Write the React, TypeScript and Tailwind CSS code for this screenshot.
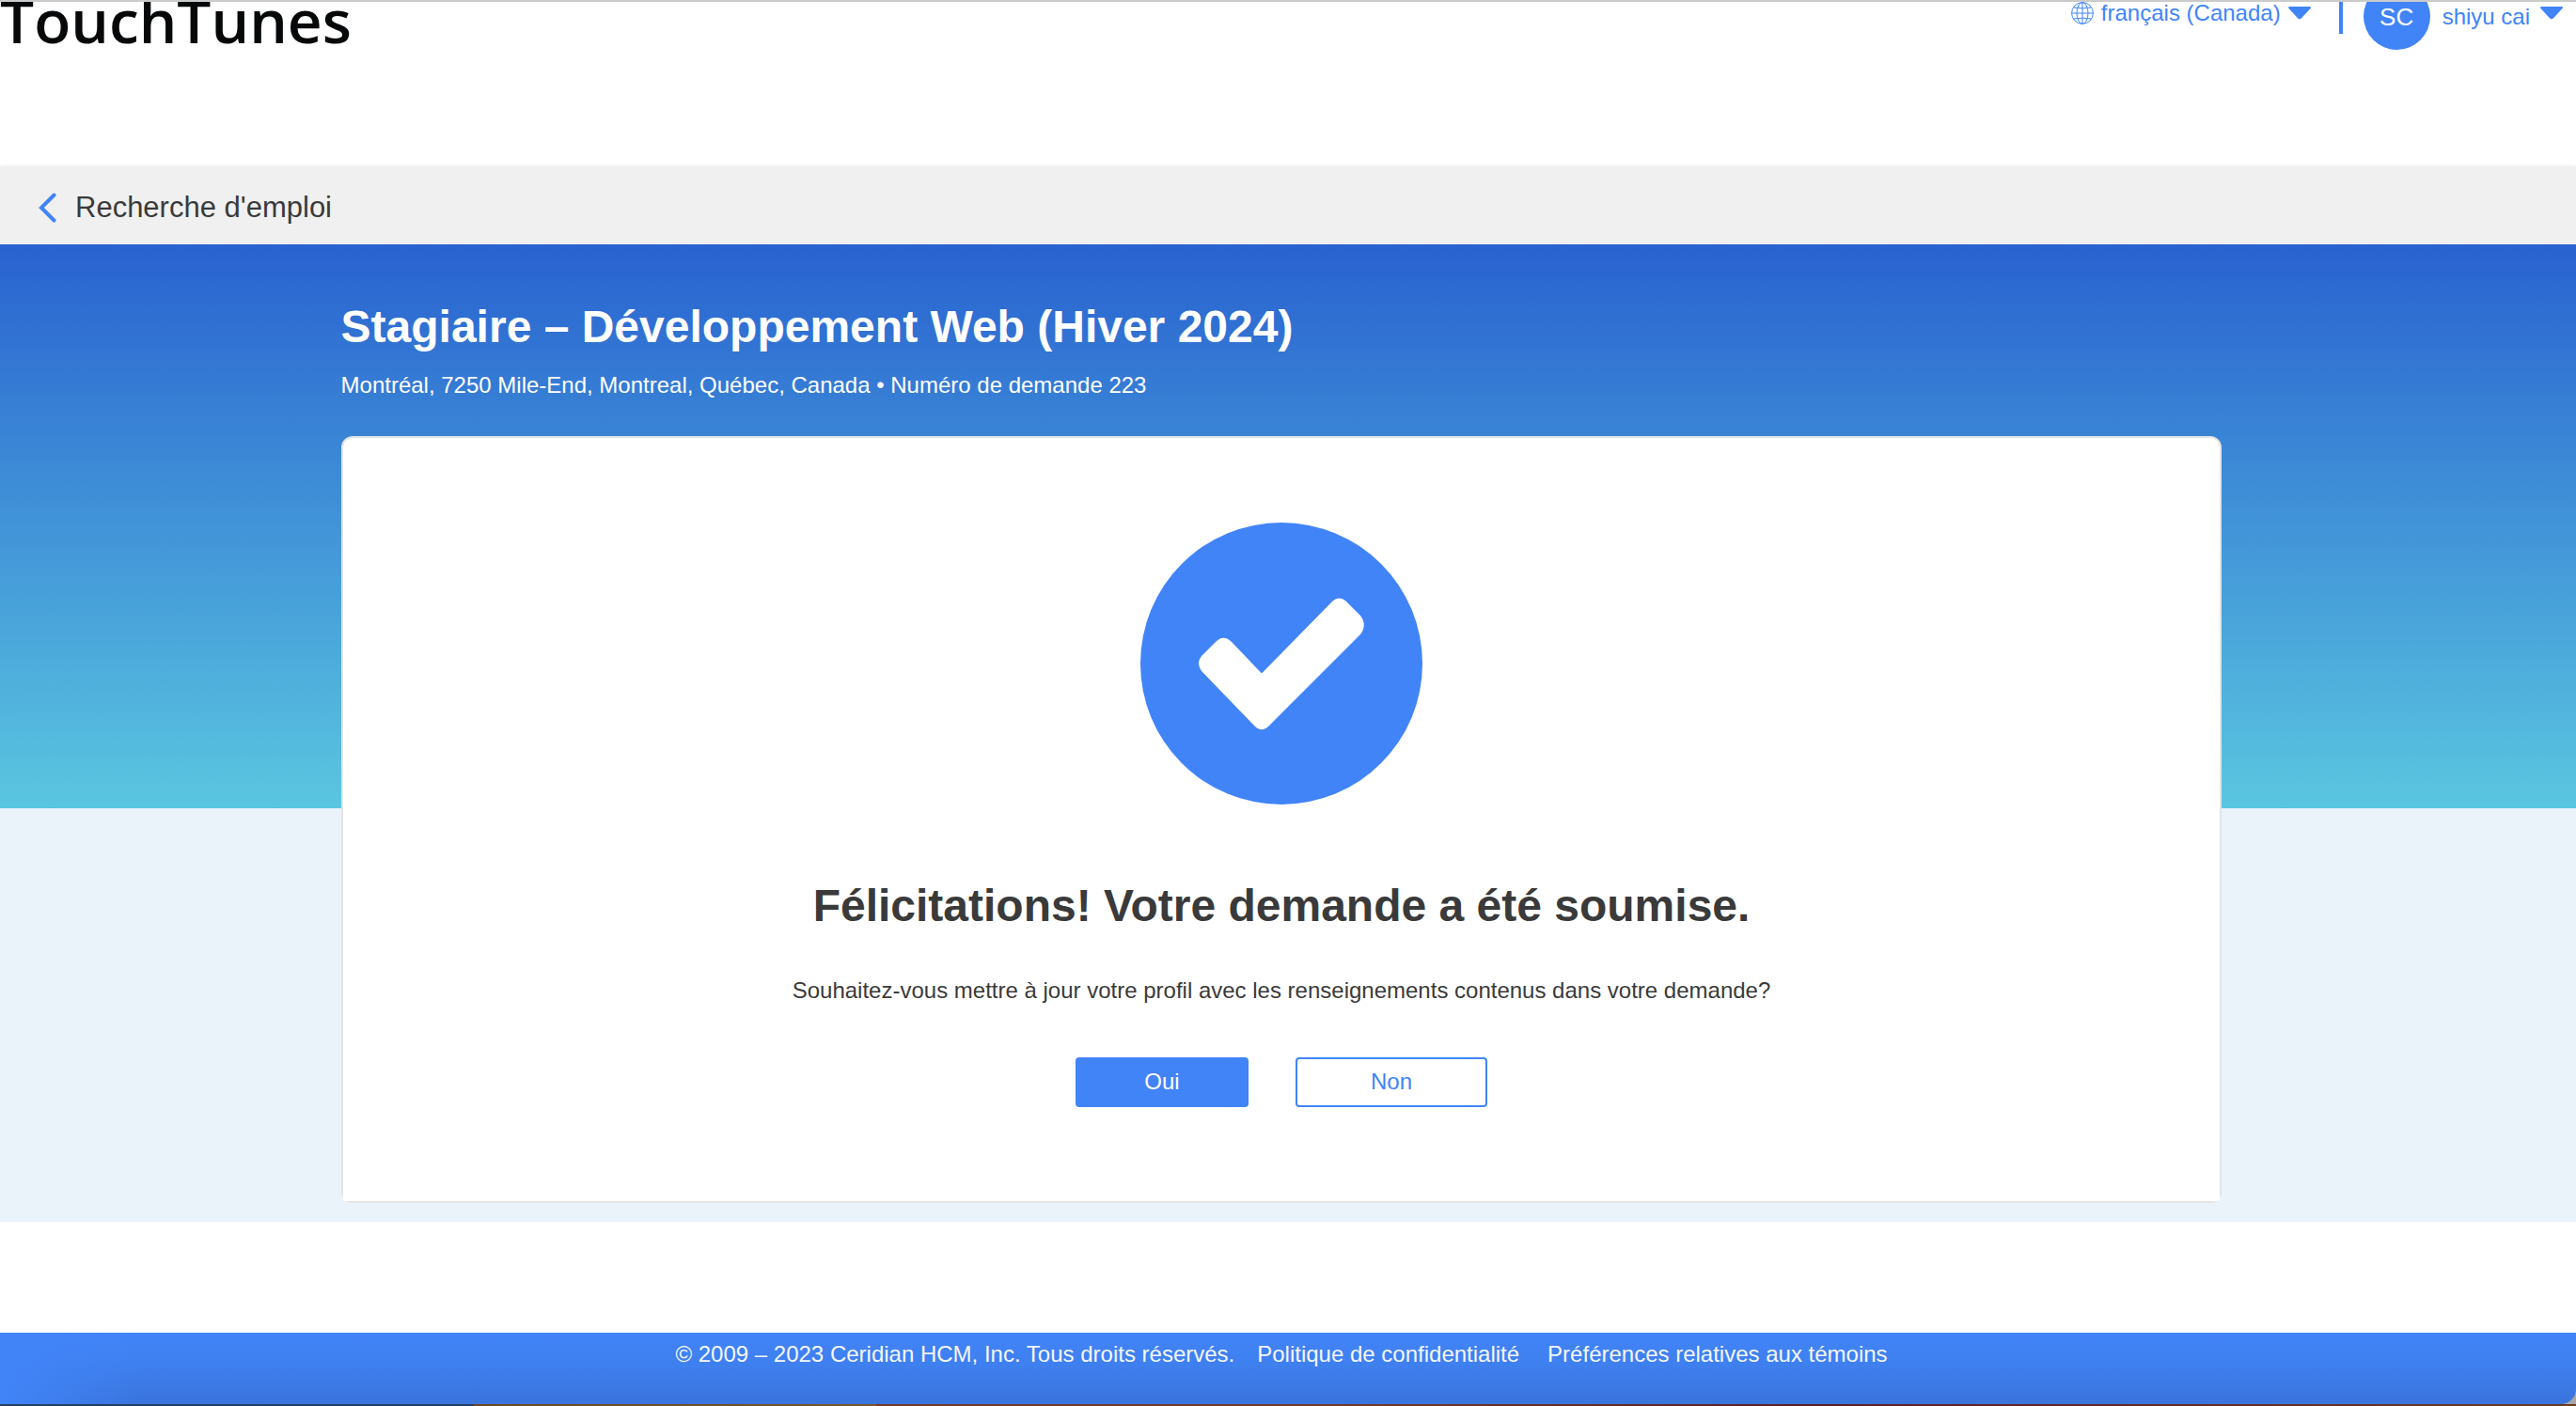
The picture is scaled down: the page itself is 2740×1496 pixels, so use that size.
import React from "react";

function Caret() {
  return (
    <svg className="h-[14px] w-6 shrink-0" viewBox="0 0 24 14" fill="currentColor" aria-hidden="true">
      <path d="M1.2 0H22.8Q24.6 0.4 23.5 2L13.8 12.6Q12 14.2 10.2 12.6L0.5 2Q-0.6 0.4 1.2 0Z" />
    </svg>
  );
}

function Globe() {
  return (
    <svg className="h-6 w-6 shrink-0" viewBox="0 0 24 24" fill="none" stroke="currentColor" strokeWidth="1" aria-hidden="true">
      <circle cx="12" cy="12" r="11.4" />
      <ellipse cx="12" cy="12" rx="6" ry="11.4" />
      <path d="M12 0.6V23.4M0.6 12H23.4M2.4 6Q12 7.8 21.6 6M2.4 18Q12 16.2 21.6 18" />
    </svg>
  );
}

function CheckBadge() {
  return (
    <svg className="h-[300px] w-[300px]" viewBox="0 0 300 300" role="img" aria-label="Demande soumise">
      <circle cx="150" cy="150" r="150" fill="#4184f8" />
      <path
        fill="#fff"
        d="M129 160.500 L204.500 83.500 Q211.500 77.500 218.500 83.500 L234 99 Q241.500 109 234 119 L136.500 216.500 Q129 224 121.500 216.500 L65 158 Q59 149.500 65 142 L80 127 Q88.500 118.500 97 127Z"
      />
    </svg>
  );
}

export default function App() {
  return (
    <div className="flex min-h-screen flex-col bg-white font-['Liberation_Sans',Arial,sans-serif] text-2xl leading-7 text-[#3a3a3a]">
      <header className="flex h-[177px] items-start justify-between overflow-hidden border-t-2 border-[#cbcbcb] pr-[14px]">
        <div className="font-['Open_Sans','Noto_Sans',sans-serif] text-[64px] leading-10 font-semibold text-[#060809]">
          TouchTunes
        </div>
        <div className="flex items-start text-[#4184f8]">
          <button type="button" className="-mt-[2px] flex items-center gap-2">
            <Globe />
            <span>français (Canada)</span>
            <Caret />
          </button>
          <span className="ml-[30px] h-[34px] w-1 bg-[#4184f8]" />
          <button type="button" className="-mt-5 ml-[22px] flex items-center">
            <span className="flex h-[71px] w-[71px] items-center justify-center rounded-full bg-[#4184f8] text-[26px] text-white">
              SC
            </span>
            <span className="ml-[13px]">shiyu cai</span>
            <span className="ml-[11px] mb-2">
              <Caret />
            </span>
          </button>
        </div>
      </header>

      <nav className="flex h-[83px] items-center bg-[#f0f0f0] pt-1 pl-[41px] shadow-[0_0_4px_#e4e4e4]">
        <a href="#recherche" className="flex items-center gap-5 text-[31px] leading-10">
          <svg className="h-8 w-[19px] text-[#4184f8]" viewBox="0 0 19 32" fill="none" stroke="currentColor" strokeWidth="4" strokeLinecap="round" aria-hidden="true">
            <path d="M16.500 2.500L3 16L16.500 29.500" />
          </svg>
          <span>Recherche d'emploi</span>
        </a>
      </nav>

      <main className="relative bg-[#eaf2fa] bg-[linear-gradient(to_bottom,#2962d0,#5ac6e0)] bg-[length:100%_600px] bg-no-repeat pr-[14px] pb-5">
        <div className="mx-auto w-[73.4%]">
          <div className="pt-[60px] text-white">
            <h1 className="text-5xl leading-14 font-bold">Stagiaire – Développement Web (Hiver 2024)</h1>
            <p className="mt-5">Montréal, 7250 Mile-End, Montreal, Québec, Canada • Numéro de demande 223</p>
          </div>
          <section className="mt-10 rounded-xl border-2 border-[#e2e4e5] bg-[#e2e4e5]">
            <div className="flex flex-col items-center rounded-t-[10px] bg-white pt-[90px] pb-[100px]">
              <CheckBadge />
              <h2 className="mt-20 text-5xl leading-14 font-bold">Félicitations! Votre demande a été soumise.</h2>
              <p className="mt-12">Souhaitez-vous mettre à jour votre profil avec les renseignements contenus dans votre demande?</p>
              <div className="mt-[57px] flex gap-[50px]">
                <button type="button" className="h-[53px] w-[184px] rounded bg-[#4184f8] pb-[2px] text-white">Oui</button>
                <button type="button" className="h-[53px] w-[204px] rounded border-2 border-[#4184f8] pb-[2px] text-[#4184f8]">Non</button>
              </div>
            </div>
          </section>
        </div>
      </main>

      <footer className="mt-auto bg-[#a8a8a8]">
        <div className="flex h-[76px] items-start justify-center rounded-br-[16px] bg-[linear-gradient(to_right,#4184f8,#4184f800_150px),linear-gradient(to_bottom,#4184f8,#3f80f0_40%,#3a74dc)] pt-[9px] pr-[14px] text-[#f4f7fd]">
          <span>© 2009 – 2023 Ceridian HCM, Inc. Tous droits réservés.</span>
          <a href="#confidentialite" className="ml-6">Politique de confidentialité</a>
          <a href="#temoins" className="ml-[30px]">Préférences relatives aux témoins</a>
        </div>
        <div className="h-[2px] bg-[linear-gradient(to_right,#23405f_18.4%,#6f4528_18.4%,#7a5530_34%,#76382a_34%,#76382a_52%,#5f1f1c_70%,#6b3a28)]" />
      </footer>
    </div>
  );
}
